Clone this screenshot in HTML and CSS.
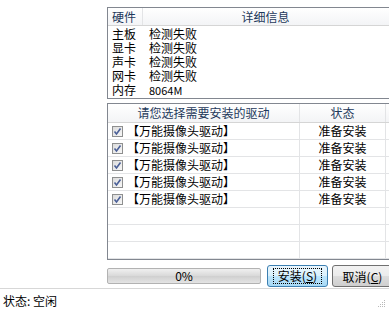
FILE: index.html
```html
<!DOCTYPE html>
<html>
<head>
<meta charset="utf-8">
<link rel="stylesheet" href="styles.css">
</head>
<body>
<div class="win">
  <div class="main">
    <div class="info">
      <div class="ihead"><div class="ic1">硬件</div><div class="ic2">详细信息</div></div>
      <div class="irows">
        <div class="irow"><span class="k">主板</span><span class="v">检测失败</span></div>
        <div class="irow"><span class="k">显卡</span><span class="v">检测失败</span></div>
        <div class="irow"><span class="k">声卡</span><span class="v">检测失败</span></div>
        <div class="irow"><span class="k">网卡</span><span class="v">检测失败</span></div>
        <div class="irow"><span class="k">内存</span><span class="v num">8064M</span></div>
      </div>
    </div>
    <div class="drivers">
      <div class="dhead"><div class="dc1">请您选择需要安装的驱动</div><div class="dc2">状态</div></div>
      <div class="drow"><div class="dc1"><span class="cb"><svg viewBox="0 0 9 9" width="9" height="9"><path d="M1.5 4.5 L3.5 7 L7.5 1.5" fill="none" stroke="#4a5f97" stroke-width="1.6"/></svg></span><span class="name">【万能摄像头驱动】</span></div><div class="dc2">准备安装</div></div>
      <div class="drow"><div class="dc1"><span class="cb"><svg viewBox="0 0 9 9" width="9" height="9"><path d="M1.5 4.5 L3.5 7 L7.5 1.5" fill="none" stroke="#4a5f97" stroke-width="1.6"/></svg></span><span class="name">【万能摄像头驱动】</span></div><div class="dc2">准备安装</div></div>
      <div class="drow"><div class="dc1"><span class="cb"><svg viewBox="0 0 9 9" width="9" height="9"><path d="M1.5 4.5 L3.5 7 L7.5 1.5" fill="none" stroke="#4a5f97" stroke-width="1.6"/></svg></span><span class="name">【万能摄像头驱动】</span></div><div class="dc2">准备安装</div></div>
      <div class="drow"><div class="dc1"><span class="cb"><svg viewBox="0 0 9 9" width="9" height="9"><path d="M1.5 4.5 L3.5 7 L7.5 1.5" fill="none" stroke="#4a5f97" stroke-width="1.6"/></svg></span><span class="name">【万能摄像头驱动】</span></div><div class="dc2">准备安装</div></div>
      <div class="drow"><div class="dc1"><span class="cb"><svg viewBox="0 0 9 9" width="9" height="9"><path d="M1.5 4.5 L3.5 7 L7.5 1.5" fill="none" stroke="#4a5f97" stroke-width="1.6"/></svg></span><span class="name">【万能摄像头驱动】</span></div><div class="dc2">准备安装</div></div>
      <div class="drow"><div class="dc1"></div><div class="dc2"></div></div>
      <div class="drow"><div class="dc1"></div><div class="dc2"></div></div>
      <div class="drow"><div class="dc1"></div><div class="dc2"></div></div>
    </div>
    <div class="actions">
      <div class="progress">0%</div>
      <div class="btn primary"><span class="focus">安装(<u>S</u>)</span></div>
      <div class="btn">取消(<u>C</u>)</div>
    </div>
  </div>
  <div class="status">
    <span>状态: 空闲</span>
    <svg class="grip" width="8" height="8" viewBox="0 0 8 8"><g fill="#b8b8b8"><rect x="6" y="0" width="1" height="1"/><rect x="4" y="2" width="1" height="1"/><rect x="6" y="2" width="1" height="1"/><rect x="2" y="4" width="1" height="1"/><rect x="4" y="4" width="1" height="1"/><rect x="6" y="4" width="1" height="1"/><rect x="0" y="6" width="1" height="1"/><rect x="2" y="6" width="1" height="1"/><rect x="4" y="6" width="1" height="1"/><rect x="6" y="6" width="1" height="1"/></g></svg>
  </div>
</div>
</body>
</html>
```

FILE: styles.css
```css
html, body {
  margin: 0;
  padding: 0;
  background: #ffffff;
  overflow: hidden;
}
body {
  font-family: "Noto Sans CJK SC", "Noto Sans", sans-serif;
  font-size: 12px;
  color: #000;
  width: 389px;
  height: 312px;
}
.win {
  width: 389px;
  height: 312px;
  display: flex;
  flex-direction: column;
}
.main {
  margin-left: 107px;
  width: 286px;
  padding-top: 7px;
  height: 288px;
  box-sizing: border-box;
}
.info {
  border: 1px solid #828790;
  height: 92px;
  box-sizing: border-box;
  background: #fff;
  overflow: hidden;
}
.ihead {
  display: flex;
  height: 18px;
  background: linear-gradient(#ffffff, #f3f4f6);
  border-bottom: 1px solid #d5d5d5;
  box-sizing: border-box;
  line-height: 17px;
  font-size: 12px;
  color: #1e395b;
}
.ic1 {
  width: 35px;
  padding-left: 4px;
  box-sizing: border-box;
  border-right: 1px solid #e3e4e6;
}
.ic2 {
  flex: 1;
  text-align: center;
  padding-right: 4px;
}
.irows {
  padding-top: 1px;
}
.irow {
  display: flex;
  height: 14px;
  line-height: 14px;
  font-size: 12px;
}
.k {
  width: 41px;
  padding-left: 4px;
  box-sizing: border-box;
}
.v.num {
  font-size: 11px;
}
.drivers {
  margin-top: 4px;
  border: 1px solid #828790;
  height: 157px;
  box-sizing: border-box;
  overflow: hidden;
}
.dhead {
  display: flex;
  height: 19px;
  line-height: 18px;
  background: linear-gradient(#ffffff, #f3f4f6);
  border-bottom: 1px solid #d5d5d5;
  box-sizing: border-box;
  font-size: 12px;
  color: #1e395b;
}
.dc1 {
  width: 192px;
  border-right: 1px solid #e3e4e6;
  box-sizing: border-box;
  display: flex;
  align-items: center;
  justify-content: center;
}
.drow .dc1 {
  justify-content: flex-start;
  padding-left: 4px;
}
.dc2 {
  width: 86px;
  text-align: center;
  border-right: 1px solid #e3e4e6;
  box-sizing: border-box;
}
.drow {
  display: flex;
  height: 17px;
  line-height: 16px;
  border-bottom: 1px solid #e3e4e6;
  box-sizing: border-box;
  font-size: 12px;
}
.cb {
  width: 11px;
  height: 11px;
  border: 1px solid #8e8f8f;
  box-sizing: border-box;
  background: linear-gradient(135deg, #dcdcdc, #f7f7f7);
  display: flex;
  align-items: center;
  justify-content: center;
  margin-right: 4px;
}
.cb svg {
  display: block;
}
.actions {
  display: flex;
  align-items: center;
  margin-top: 5px;
  gap: 4px;
}
.progress {
  width: 154px;
  height: 16px;
  border: 1px solid #b2b2b2;
  box-sizing: border-box;
  background: linear-gradient(#f0f0f0, #d8d8d8 50%, #cfcfcf 51%, #e4e4e4);
  text-align: center;
  line-height: 14px;
  font-size: 12px;
  border-radius: 2px;
  margin-right: 2px;
}
.btn {
  width: 61px;
  height: 22px;
  border: 1px solid #707070;
  border-radius: 3px;
  box-sizing: border-box;
  background: linear-gradient(#f2f2f2, #ebebeb 50%, #dddddd 51%, #cfcfcf);
  display: flex;
  align-items: center;
  justify-content: center;
  font-size: 12px;
}
.btn.primary {
  border-color: #3c7fb1;
  background: linear-gradient(#eaf6fd, #d9f0fc 50%, #bee6fd 51%, #a7d9f5);
}
.focus {
  border: 1px dotted #000;
  padding: 0 4px;
  line-height: 14px;
}
u {
  text-decoration: underline;
}
.status {
  border-top: 1px solid #d7d7d7;
  height: 24px;
  box-sizing: border-box;
  display: flex;
  align-items: center;
  justify-content: space-between;
  padding: 0 3px 0 3px;
  font-size: 12px;
}
.grip {
  align-self: flex-end;
  margin-bottom: 4px;
}
```
